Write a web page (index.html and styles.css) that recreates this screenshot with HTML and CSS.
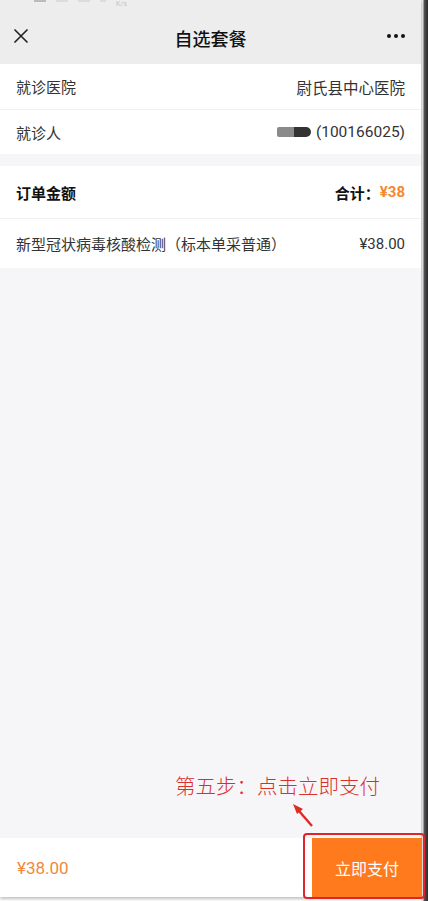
FILE: index.html
```html
<!DOCTYPE html>
<html lang="zh-CN">
<head>
<meta charset="utf-8">
<title>自选套餐</title>
<link rel="stylesheet" href="styles.css">
</head>
<body>
<div class="frame">
  <div class="screen">
    <header class="nav">
      <div class="status"><span class="sb sb1"></span><span class="sb sb2"></span><span class="sb sb3"></span><span class="sb sb4"></span><span class="sbt">K/s</span></div>
      <div class="navbar">
        <svg class="close" viewBox="0 0 16 16" width="16" height="16"><path d="M1.5 1.5 L14.5 14.5 M14.5 1.5 L1.5 14.5" stroke="#222" stroke-width="1.6" fill="none"/></svg>
        <h1 class="title">自选套餐</h1>
        <div class="more"><i></i><i></i><i></i></div>
      </div>
    </header>
    <main class="content">
      <section class="card">
        <div class="row row-info"><span class="label">就诊医院</span><span class="value">尉氏县中心医院</span></div>
        <div class="row row-info"><span class="label">就诊人</span><span class="value"><span class="mask"><span class="m1"></span><span class="m2"></span></span>(100166025)</span></div>
      </section>
      <section class="card order">
        <div class="row row-order"><span class="label bold">订单金额</span><span class="value bold">合计：<span class="price">¥38</span></span></div>
        <div class="row row-order"><span class="label">新型冠状病毒核酸检测（标本单采普通）</span><span class="value">¥38.00</span></div>
      </section>
    </main>
    <footer class="bar">
      <span class="total">¥38.00</span>
      <button class="pay">立即支付</button>
    </footer>
    <div class="note">第五步：点击立即支付</div>
    <svg class="arrow" width="30" height="30" viewBox="0 0 30 30"><path d="M24 25 L11 10" stroke="#e02a25" stroke-width="2.4" fill="none"/><path d="M5 3 L15 8 L9 13 Z" fill="#e02a25"/></svg>
    <div class="highlight"></div>
  </div>
  <div class="edge"></div>
</div>
</body>
</html>
```
FILE: styles.css
```css
* { box-sizing: border-box; }
html, body { margin: 0; padding: 0; }
body {
  width: 428px;
  height: 901px;
  overflow: hidden;
  font-family: Roboto, "Noto Sans CJK SC", sans-serif;
  color: #333;
  background: #fff;
}
.frame {
  display: flex;
  height: 901px;
}
.screen {
  position: relative;
  width: 421px;
  height: 897px;
  display: flex;
  flex-direction: column;
  background: #f6f6f8;
  box-shadow: 0 2px 3px rgba(0,0,0,0.25);
}
.edge {
  width: 7px;
  height: 901px;
  background: linear-gradient(to right, #e4e4e4 0, #e4e4e4 2px, #555 3px, #2a2a2a 7px);
}
.nav {
  background: #ededed;
  height: 64px;
  display: flex;
  flex-direction: column;
}
.status {
  height: 16px;
  display: flex;
  align-items: flex-start;
  gap: 10px;
  padding-left: 34px;
}
.sb { height: 2px; background: #dcdcdc; }
.sb1 { width: 12px; background: #bbb; }
.sb2 { width: 12px; }
.sb3 { width: 12px; }
.sb4 { width: 6px; }
.sbt { font-size: 7px; line-height: 8px; color: #c4c4c4; margin-top: 0; }
.navbar {
  flex: 1;
  display: flex;
  align-items: center;
  justify-content: space-between;
  padding: 0 16px 0 13px;
  margin-top: -8px;
}
.close { display: block; }
.title {
  margin: 0;
  font-size: 18px;
  font-weight: 500;
  color: #111;
  position: absolute;
  left: 0;
  right: 0;
  top: 26px;
  text-align: center;
  pointer-events: none;
  line-height: 28px;
}
.more { display: flex; gap: 3px; }
.more i {
  width: 4px; height: 4px; border-radius: 50%;
  background: #111; display: block;
}
.content { flex: 1; }
.card { background: #fff; }
.order { margin-top: 12px; }
.row {
  display: flex;
  justify-content: space-between;
  align-items: center;
  padding: 0 16px;
  font-size: 15px;
  color: #333;
}
.row-info { height: 45px; }
.row-info + .row-info { border-top: 1px solid #f0f0f0; }
.row-info .value { font-size: 15.5px; }
.row-order { height: 52px; }
.row-order + .row-order { border-top: 1px solid #f0f0f0; height: 50px; }
.bold { font-weight: 700; color: #111; }
.price { color: #f5882e; }
.value { display: flex; align-items: center; }
.mask {
  display: inline-flex;
  width: 34px; height: 10px;
  margin-right: 5px;
}
.m1 { width: 17px; background: #8a8a8a; border-radius: 2px 0 0 2px; }
.m2 { width: 17px; background: #333; border-radius: 0 5px 5px 0; }
.bar {
  height: 59px;
  background: #fff;
  display: flex;
  align-items: center;
  justify-content: space-between;
  padding-left: 17px;
}
.total { color: #f0893c; font-size: 17px; }
.pay {
  height: 59px;
  width: 110px;
  border: 0;
  background: #ff7a1c;
  color: #fff;
  font-family: inherit;
  font-size: 16px;
  padding: 0;
  margin-right: -1px;
}
.note {
  position: absolute;
  left: 175px;
  top: 771px;
  font-size: 20.5px;
  color: #dc2f2a;
  line-height: 28px;
  white-space: nowrap;
  font-family: "Noto Sans CJK SC", sans-serif;
  font-weight: 300;
}
.arrow {
  position: absolute;
  left: 288px;
  top: 801px;
}
.highlight {
  position: absolute;
  left: 303px;
  top: 833px;
  width: 122px;
  height: 66px;
  border: 2px solid #e1242a;
  border-radius: 4px;
}
```
